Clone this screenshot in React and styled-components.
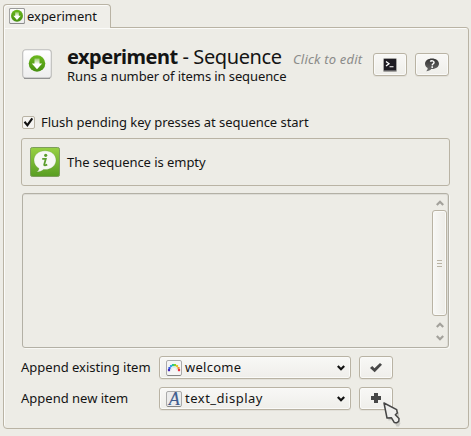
import React from "react";
import styled, { createGlobalStyle } from "styled-components";

const Global = createGlobalStyle`
  * { box-sizing: border-box; }
  body { margin: 0; background: #edece6; overflow: hidden; }
  svg { display: block; flex: none; }
`;

const Window = styled.main`
  position: relative;
  width: 471px;
  height: 436px;
  padding: 4px 2px 0 3px;
  background: #edece6;
  color: #141414;
  font-family: "Noto Sans", "Open Sans", sans-serif;
  font-size: 13px;
  line-height: 18px;
`;

const Tab = styled.div`
  position: relative;
  z-index: 1;
  display: flex;
  align-items: center;
  gap: 2px;
  width: 108px;
  height: 24px;
  padding: 0 0 1px 5px;
  background: #efeee9;
  border: 1px solid #b9b3a4;
  border-bottom: 0;
  border-radius: 4px 4px 0 0;
  box-shadow: inset 1px 1px 0 #fbfbf9;
`;

const Pane = styled.section`
  width: 466px;
  height: 402px;
  margin-top: -1px;
  padding: 21px 18px 0 18px;
  border: 1px solid #b9b3a4;
  border-radius: 0 3px 4px 4px;
  box-shadow: inset 1px 1px 0 #fbfbf9;
`;

const Label = styled.span`
  white-space: pre;
  letter-spacing: ${(p) => p.$track || 0}px;
`;

const Header = styled.header`
  display: flex;
  height: 65px;
`;

const HeaderIcon = styled.div`
  width: 45px;
`;

const Titles = styled.div`
  width: 226px;
  margin-top: -5px;
`;

const Title = styled.h1`
  margin: 0;
  font-size: 20px;
  line-height: 26px;
  font-weight: 400;
  white-space: pre;
  letter-spacing: ${(p) => p.$track}px;
`;

const Name = styled.strong`
  font-weight: 700;
  letter-spacing: ${(p) => p.$track}px;
`;

const Subtitle = styled.p`
  margin: -3px 0 0;
  line-height: 18px;
  white-space: pre;
  letter-spacing: ${(p) => p.$track}px;
`;

const Hint = styled.em`
  width: 80px;
  margin-top: 1px;
  color: #8b8b89;
  white-space: pre;
  letter-spacing: ${(p) => p.$track}px;
`;

const HeaderButtons = styled.div`
  display: flex;
  gap: 8px;
  margin-top: 4px;
`;

const Button = styled.button`
  display: flex;
  align-items: center;
  justify-content: center;
  width: 34px;
  height: 23px;
  padding: 0;
  border: 1px solid #b9b3a4;
  border-radius: 3px;
  background: linear-gradient(#f8f8f6, #efeeea);
  box-shadow: inset 0 0 0 1px #fafaf8, 0 1px 0 #e2e0d9;
`;

const CheckRow = styled.label`
  display: flex;
  align-items: center;
  gap: 6px;
  height: 16px;
`;

const CheckBox = styled.span`
  display: flex;
  width: 13px;
  height: 13px;
  border: 1px solid #b9b3a4;
  border-radius: 2px;
  background: #f5f4f1;
`;

const Notice = styled.div`
  display: flex;
  align-items: center;
  gap: 7px;
  width: 429px;
  height: 48px;
  margin: 8px 0 7px -1px;
  padding-left: 8px;
  border: 1px solid #b9b3a4;
  border-radius: 3px;
`;

const ItemList = styled.div`
  display: flex;
  justify-content: flex-end;
  width: 427px;
  height: 155px;
  border: 1px solid #b3b0a5;
  border-radius: 3px;
  box-shadow: inset 0 1px 0 #dddcd6, inset -1px 0 0 #dddcd6, 1px 1px 0 #f8f8f5;
`;

const Scrollbar = styled.div`
  display: flex;
  flex-direction: column;
  align-items: center;
  width: 15px;
  margin-right: 1px;
  padding-top: 6px;
`;

const Thumb = styled.div`
  display: flex;
  flex-direction: column;
  align-items: center;
  justify-content: center;
  gap: 2px;
  width: 15px;
  height: 106px;
  margin: 4px 0 6px;
  border: 1px solid #b9b3a4;
  border-radius: 3px;
  background: linear-gradient(90deg, #f8f8f6, #edece7);
  box-shadow: inset 0 0 0 1px #fafaf8;
`;

const Grip = styled.i`
  width: 5px;
  height: 1px;
  background: #b9b3a4;
`;

const ArrowPair = styled.div`
  display: flex;
  flex-direction: column;
  gap: 7px;
`;

const AppendRow = styled.div`
  display: grid;
  grid-template-columns: 138px 192px 34px;
  align-items: center;
  height: 23px;
  margin: 8px 0 0 -1px;

  & > span { margin-top: -2px; }
  & > button { margin-left: 8px; }
`;

const Combo = styled.div`
  display: flex;
  align-items: center;
  gap: 3px;
  height: 23px;
  padding: 0 5px 0 6px;
  border: 1px solid #b9b3a4;
  border-radius: 3px;
  background: linear-gradient(#f8f8f6, #efeeea);
  box-shadow: inset 0 0 0 1px #fafaf8, 0 1px 0 #e2e0d9;
`;

const ComboText = styled(Label)`
  flex: 1;
  margin-top: -2px;
`;

const Pointer = styled.div`
  position: absolute;
  left: 382px;
  top: 401px;
`;

function SequenceIcon({ size }) {
  const small = size < 20;
  const r = small ? 11.2 : 8.3;
  return (
    <svg width={size} height={size} viewBox="0 0 30 30">
      <defs>
        <linearGradient id="tile" x2="0" y2="1">
          <stop stopColor="#fff" />
          <stop offset="1" stopColor="#ededed" />
        </linearGradient>
        <linearGradient id="green" x2="0" y2="1">
          <stop stopColor="#6bb81d" />
          <stop offset="1" stopColor="#468f10" />
        </linearGradient>
        <linearGradient id="arrowFade" x2="0" y2="1">
          <stop stopColor="#fff" stopOpacity="0.35" />
          <stop offset="0.5" stopColor="#fff" />
        </linearGradient>
      </defs>
      <rect x="0.7" y="0.7" width="28.6" height="28.6" rx="3" fill="url(#tile)" stroke={small ? "#9a9a9a" : "#bcbcba"} strokeWidth={small ? 1.9 : 1.1} />
      <path d="M2 29.3H28" stroke="#858585" strokeWidth={small ? 1.6 : 1} />
      <circle cx="15" cy="14.5" r={r} fill="url(#green)" />
      <g transform={`translate(15 14.5) scale(${r / 8.3})`}>
        <path d="M-2.5-5H2.5V0H5.2L0 5.8L-5.2 0H-2.5Z" fill="url(#arrowFade)" />
      </g>
    </svg>
  );
}

function TerminalIcon() {
  return (
    <svg width="16" height="16" viewBox="0 0 16 16">
      <rect x="1" y="1" width="14" height="14" rx="1.5" fill="#a3a2a0" />
      <rect x="2" y="2" width="12" height="11.5" fill="#1d1b22" />
      <path d="M4 4.5L7 6.8L4 9" fill="none" stroke="#fff" strokeWidth="1.3" />
      <path d="M7.5 9.7H11.5" stroke="#ddd" strokeWidth="1.2" />
    </svg>
  );
}

function HelpIcon() {
  return (
    <svg width="16" height="16" viewBox="0 0 16 16">
      <defs>
        <linearGradient id="help" x2="0" y2="1">
          <stop stopColor="#343434" />
          <stop offset="1" stopColor="#6b6b6b" />
        </linearGradient>
      </defs>
      <path d="M8 1.5C4 1.5 1 3.7 1 6.8C1 8.6 2 10.2 3.7 11.1C3.6 12.6 3 13.6 2.2 14.3C4.5 14.2 6.2 13.3 7.2 12C11.8 12.3 15 10 15 6.8C15 3.7 12 1.5 8 1.5Z" fill="url(#help)" />
      <path d="M6.2 4.6C7.5 3.2 10 3.8 10 5.4C10 6.8 8.3 6.8 8.2 8.4" fill="none" stroke="#fff" strokeWidth="1.5" />
      <rect x="7.4" y="9.3" width="1.6" height="1.6" fill="#fff" />
    </svg>
  );
}

function InfoIcon() {
  return (
    <svg width="30" height="30" viewBox="0 0 30 30">
      <defs>
        <linearGradient id="info" x2="0" y2="1">
          <stop stopColor="#98d144" />
          <stop offset="1" stopColor="#589d22" />
        </linearGradient>
      </defs>
      <rect x="0.5" y="0.5" width="29" height="29" rx="1.8" fill="url(#info)" stroke="#7d9d5c" />
      <path d="M15 3.8C8.5 3.8 4 7.9 4 13.2C4 16.8 6 19.8 9 21.4C8.7 23.2 7.8 24.2 6.4 25C9.5 25 12 24 13.4 22.5C20.8 23.2 26 18.6 26 13.2C26 7.9 21.5 3.8 15 3.8Z" fill="#f7f8f5" stroke="#4d8a23" strokeOpacity=".35" strokeWidth=".7" />
      <circle cx="15.7" cy="8.3" r="1.6" fill="#5c9e2e" />
      <path d="M12.2 11.8H15.8L14.2 17.6Q14 19 17.2 17.7" fill="none" stroke="#5c9e2e" strokeWidth="1.8" />
    </svg>
  );
}

const dots = [
  ["#4527b8", 3, 10], ["#2f55df", 3.5, 8], ["#3aa3ee", 5, 6],
  ["#29c58c", 7, 5], ["#7cd12c", 9, 5], ["#e6c42d", 11, 6],
  ["#f18e34", 12.5, 8], ["#eb3040", 13, 10],
];

function SketchpadIcon() {
  return (
    <svg width="16" height="16" viewBox="0 0 16 16">
      <rect x="0.5" y="0.5" width="15" height="15" rx="1.5" fill="#f5f5f5" stroke="#aaa" />
      <path d="M1.5 15.5H14.5" stroke="#858585" />
      {dots.map(([c, x, y]) => (
        <rect key={c} x={x - 1.1} y={y - 1} width="2.2" height="2.2" fill={c} />
      ))}
      <path d="M5.5 10V8.5L7 7.5H9L10.5 8.5V10" fill="none" stroke="#d5e8e4" strokeWidth="0.8" />
    </svg>
  );
}

const IconLetter = styled.text`
  font: italic 18px "Liberation Serif", serif;
  fill: #3f5c8e;
  stroke: #3f5c8e;
  stroke-width: 0.2px;
`;

const LetterSvg = styled.svg`
  overflow: visible;
`;

function TextIcon() {
  return (
    <LetterSvg width="16" height="16" viewBox="0 0 16 16">
      <rect x="0.5" y="0.5" width="15" height="15" rx="1.5" fill="#ececec" stroke="#aaa" />
      <path d="M1.5 15.5H14.5" stroke="#858585" />
      <IconLetter x="8.3" y="13.5" textAnchor="middle">A</IconLetter>
    </LetterSvg>
  );
}

function Chevron({ up, color = "#a3a19b" }) {
  return (
    <svg width="8" height="6" viewBox="0 0 8 6">
      <path d={up ? "M0.8 5L4 1.8L7.2 5" : "M0.8 1L4 4.2L7.2 1"} fill="none" stroke={color} strokeWidth="2.2" />
    </svg>
  );
}

function Tick() {
  return (
    <svg width="11" height="11" viewBox="0 0 11 11">
      <path d="M1.5 4.8L4.4 8.2L9.3 1.4" fill="none" stroke="#111" strokeWidth="2.1" />
    </svg>
  );
}

function ApplyIcon() {
  return (
    <svg width="14" height="12" viewBox="0 0 14 12">
      <path d="M1 6L3.2 4L5.5 6.2L11 1L13 2.8L5.7 10.3Z" fill="#484848" />
    </svg>
  );
}

function PlusIcon() {
  return (
    <svg width="10" height="11" viewBox="0 0 10 11">
      <path d="M3 0H7V3H10V7H7V10H3V7H0V3H3Z" fill="#474747" />
    </svg>
  );
}

function Cursor() {
  return (
    <svg width="22" height="27" viewBox="0 0 22 27">
      <path d="M3 3L16 10V14L13.7 16L17.5 20.5L16 24H13.5L10 17.5L5.5 18Z" fill="#777" opacity=".3" transform="translate(1 1.5)" />
      <path d="M2 2L14.7 8.7L15.3 12L13.3 13.8L17 17.5L16.8 20.3L14.5 21.8L12.2 21.4L9.5 16.8L5 17Z" fill="#efefed" stroke="#454545" strokeWidth="1.5" strokeLinejoin="round" />
    </svg>
  );
}

export default function App() {
  return (
    <Window>
      <Global />
      <Tab>
        <SequenceIcon size={16} />
        <Label $track={-0.03}>experiment</Label>
      </Tab>
      <Pane>
        <Header>
          <HeaderIcon><SequenceIcon size={30} /></HeaderIcon>
          <Titles>
            <Title $track={-0.4}><Name $track={-0.5}>experiment</Name> - Sequence</Title>
            <Subtitle $track={-0.1}>Runs a number of items in sequence</Subtitle>
          </Titles>
          <Hint $track={0.2}>Click to edit</Hint>
          <HeaderButtons>
            <Button aria-label="View script"><TerminalIcon /></Button>
            <Button aria-label="Help"><HelpIcon /></Button>
          </HeaderButtons>
        </Header>
        <CheckRow>
          <CheckBox><Tick /></CheckBox>
          <Label $track={-0.04}>Flush pending key presses at sequence start</Label>
        </CheckRow>
        <Notice>
          <InfoIcon />
          <Label $track={-0.05}>The sequence is empty</Label>
        </Notice>
        <ItemList>
          <Scrollbar>
            <Chevron up />
            <Thumb><Grip /><Grip /><Grip /></Thumb>
            <ArrowPair>
              <Chevron up />
              <Chevron />
            </ArrowPair>
          </Scrollbar>
        </ItemList>
        <AppendRow>
          <Label $track={0}>Append existing item</Label>
          <Combo>
            <SketchpadIcon />
            <ComboText $track={0.25}>welcome</ComboText>
            <Chevron color="#111" />
          </Combo>
          <Button aria-label="Append existing"><ApplyIcon /></Button>
        </AppendRow>
        <AppendRow>
          <Label $track={0}>Append new item</Label>
          <Combo>
            <TextIcon />
            <ComboText $track={0.5}>text_display</ComboText>
            <Chevron color="#111" />
          </Combo>
          <Button aria-label="Append new"><PlusIcon /></Button>
        </AppendRow>
      </Pane>
      <Pointer><Cursor /></Pointer>
    </Window>
  );
}
